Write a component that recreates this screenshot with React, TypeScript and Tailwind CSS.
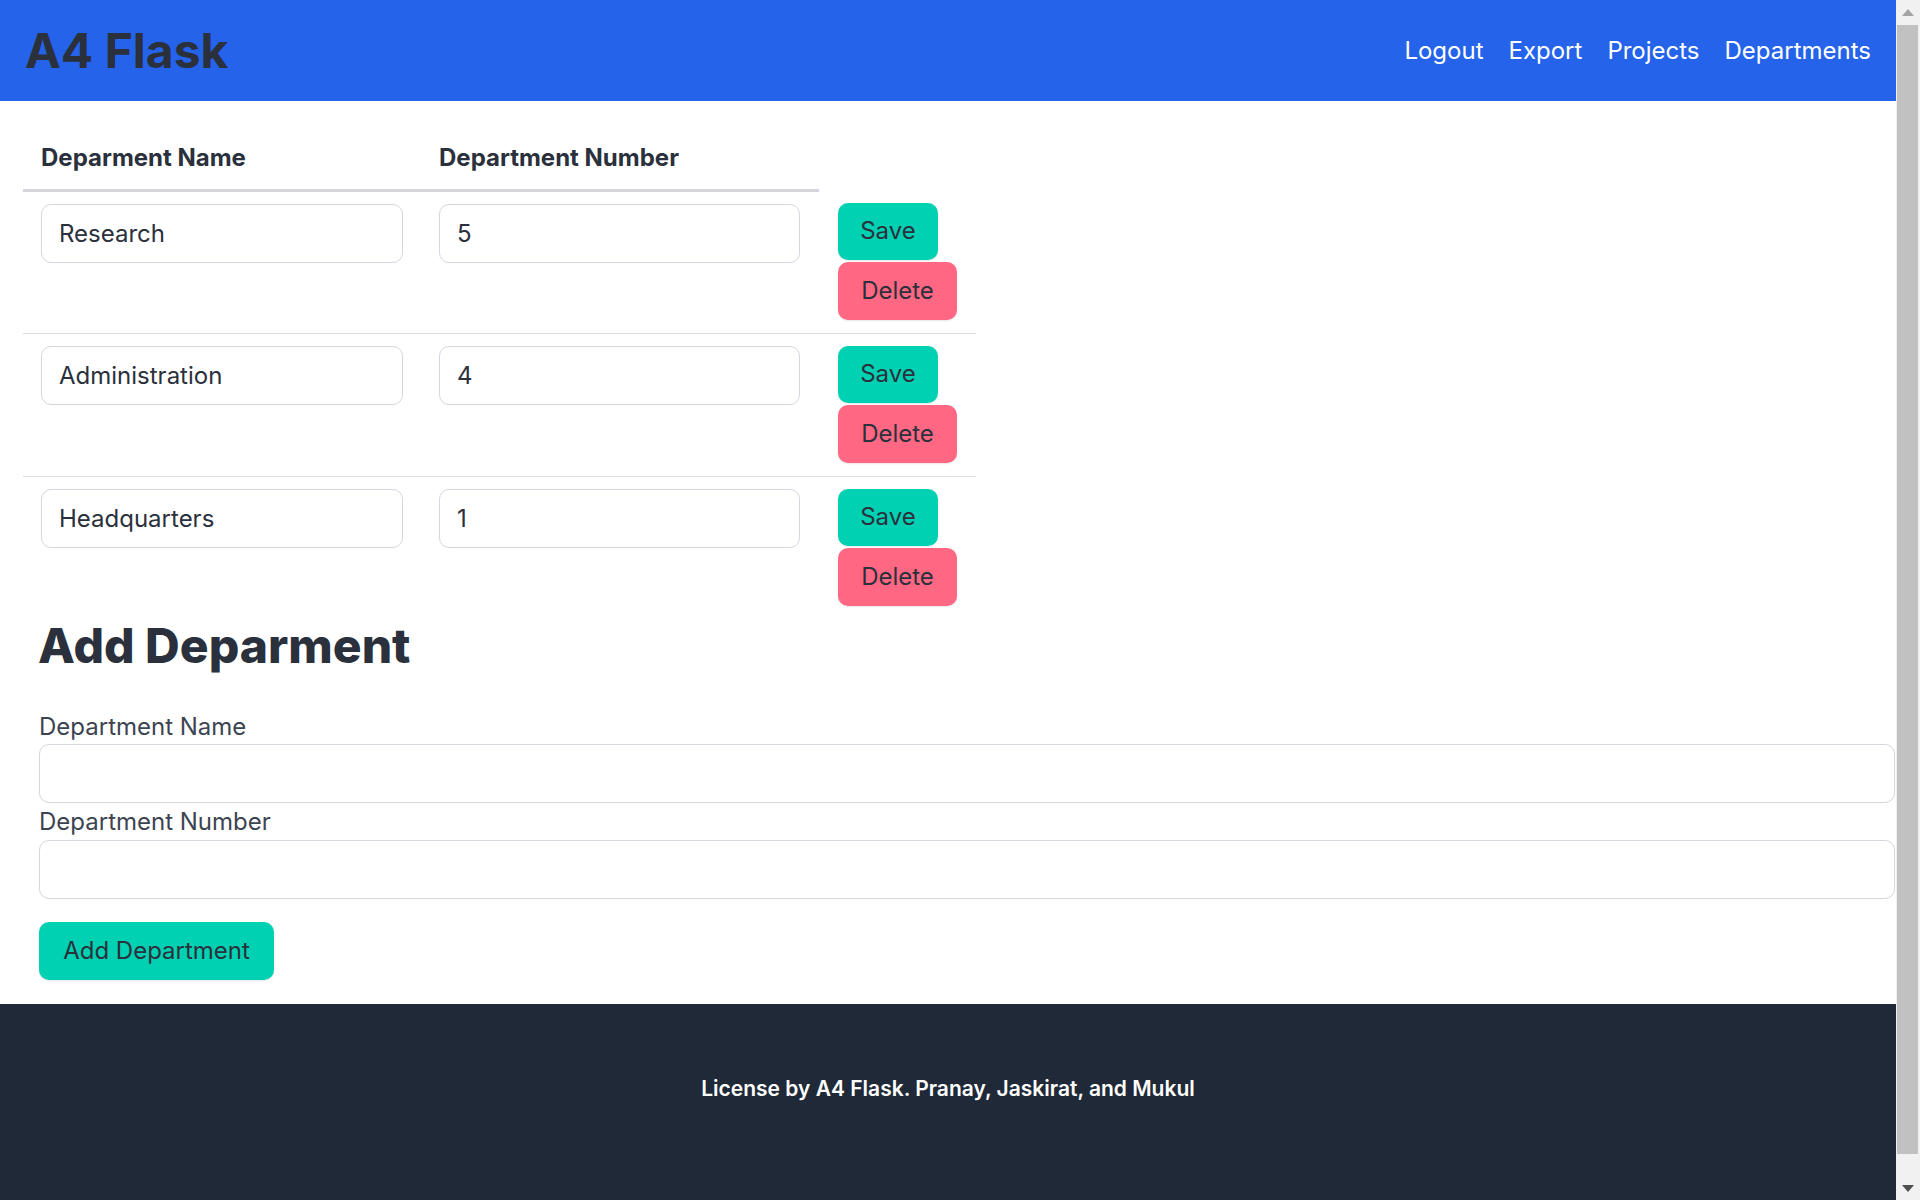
import React from "react";

const rows = [
  { name: "Research", num: "5" },
  { name: "Administration", num: "4" },
  { name: "Headquarters", num: "1" },
];

function FakeScrollbar() {
  return (
    <div className="w-[24px] shrink-0 h-screen flex flex-col bg-[#f1f1f1]">
      <div className="h-[25px] flex items-center justify-center">
        <svg width="12" height="7" viewBox="0 0 12 7">
          <polygon points="0,7 12,7 6,0" fill="#a3a3a3" />
        </svg>
      </div>
      <div className="h-[1129px] ml-[1px] mr-[2px] bg-[#c1c1c1]" />
      <div className="flex-1" />
      <div className="h-[24px] flex items-center justify-center">
        <svg width="12" height="7" viewBox="0 0 12 7">
          <polygon points="0,0 12,0 6,7" fill="#505050" />
        </svg>
      </div>
    </div>
  );
}

export default function App() {
  return (
    <div className="flex h-screen overflow-hidden bg-white font-['Inter',_sans-serif] text-[#2a303c]">
      <div className="flex-1 min-w-0 h-screen overflow-hidden">
        <header className="h-[101px] bg-[#2563eb] flex items-center justify-between px-[25px]">
          <span className="text-[48px] font-bold leading-none">A4 Flask</span>
          <nav className="flex gap-[25px] text-white text-[24px] leading-none">
            <a>Logout</a>
            <a>Export</a>
            <a>Projects</a>
            <a>Departments</a>
          </nav>
        </header>

        <main className="pl-[23px] pt-[27px]">
          <table className="border-collapse">
            <thead>
              <tr>
                <th className="w-[398px] text-left px-[18px] pt-[18px] pb-[19px] text-[24px] leading-[24px] font-bold border-b-[3px] border-[#d5d6dd]">
                  Deparment Name
                </th>
                <th className="w-[398px] text-left px-[18px] pt-[18px] pb-[19px] text-[24px] leading-[24px] font-bold border-b-[3px] border-[#d5d6dd]">
                  Department Number
                </th>
              </tr>
            </thead>
            <tbody>
              {rows.map((r, i) => (
                <tr
                  key={r.name}
                  className={i < rows.length - 1 ? "border-b border-[#dcdce2]" : ""}
                >
                  <td className="px-[18px] pt-[12px] pb-[13px] align-top">
                    <input
                      defaultValue={r.name}
                      className="w-[362px] h-[59px] rounded-[10px] border border-[#d6d6de] bg-white px-[17px] text-[24px] text-[#2a303c] outline-none"
                    />
                  </td>
                  <td className="px-[18px] pt-[12px] pb-[13px] align-top">
                    <input
                      defaultValue={r.num}
                      className="w-[361px] h-[59px] rounded-[10px] border border-[#d6d6de] bg-white px-[17px] text-[24px] text-[#2a303c] outline-none"
                    />
                  </td>
                  <td className="pl-[19px] pr-[19px] pt-[12px] pb-[13px] align-top">
                    <div className="flex flex-col items-start">
                      <button className="h-[57px] w-[100px] rounded-[10px] bg-[#00d1b2] text-[24px] text-[#2a303c] shadow-[0_1px_2px_rgba(0,0,0,0.1)]">
                        Save
                      </button>
                      <button className="mt-[2px] h-[58px] w-[119px] rounded-[10px] bg-[#ff6782] text-[24px] text-[#2a303c] shadow-[0_1px_2px_rgba(0,0,0,0.1)]">
                        Delete
                      </button>
                    </div>
                  </td>
                </tr>
              ))}
            </tbody>
          </table>
        </main>

        <section className="pl-[39px] pr-[1px] pt-[3px]">
          <h1 className="-ml-[1px] text-[48px] leading-[48px] font-extrabold">Add Deparment</h1>
          <label className="block mt-[45px] text-[24px] leading-[24px] text-[#3d4451]">Department Name</label>
          <input className="block mt-[5px] w-full h-[59px] rounded-[10px] border border-[#d6d6de] bg-white px-[17px] text-[24px] outline-none" />
          <label className="block mt-[7px] text-[24px] leading-[24px] text-[#3d4451]">Department Number</label>
          <input className="block mt-[6px] w-full h-[59px] rounded-[10px] border border-[#d6d6de] bg-white px-[17px] text-[24px] outline-none" />
          <button className="mt-[23px] h-[58px] w-[235px] rounded-[10px] bg-[#00d1b2] text-[24px] text-[#2a303c] shadow-[0_1px_2px_rgba(0,0,0,0.1)]">
            Add Department
          </button>
        </section>

        <footer className="mt-[24px] bg-[#1f2937] pt-[74px] pb-[124px] text-center">
          <p className="text-white text-[21px] leading-[21px] font-semibold">
            License by A4 Flask. Pranay, Jaskirat, and Mukul
          </p>
        </footer>
      </div>
      <FakeScrollbar />
    </div>
  );
}
